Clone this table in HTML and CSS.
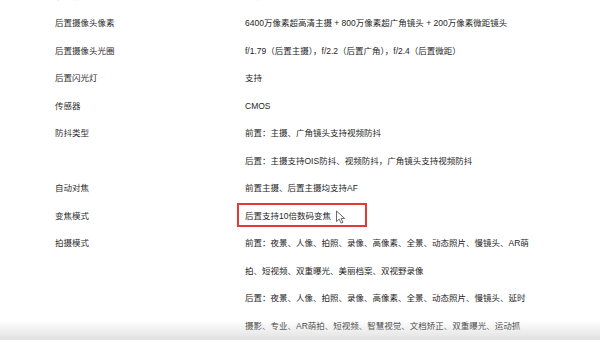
FILE: index.html
```html
<!DOCTYPE html>
<html lang="zh-CN">
<head>
<meta charset="utf-8">
<link rel="stylesheet" href="styles.css">
</head>
<body>
<div class="spec">
  <div class="row">
    <div class="label">后置摄像头数量</div>
    <div class="value"><p>三摄</p></div>
  </div>
  <div class="row">
    <div class="label">后置摄像头像素</div>
    <div class="value"><p>6400万像素超高清主摄 + 800万像素超广角镜头 + 200万像素微距镜头</p></div>
  </div>
  <div class="row">
    <div class="label">后置摄像头光圈</div>
    <div class="value"><p>f/1.79（后置主摄），f/2.2（后置广角），f/2.4（后置微距）</p></div>
  </div>
  <div class="row">
    <div class="label">后置闪光灯</div>
    <div class="value"><p>支持</p></div>
  </div>
  <div class="row">
    <div class="label">传感器</div>
    <div class="value"><p>CMOS</p></div>
  </div>
  <div class="row">
    <div class="label">防抖类型</div>
    <div class="value">
      <p>前置：主摄、广角镜头支持视频防抖</p>
      <p>后置：主摄支持OIS防抖、视频防抖，广角镜头支持视频防抖</p>
    </div>
  </div>
  <div class="row">
    <div class="label">自动对焦</div>
    <div class="value"><p>前置主摄、后置主摄均支持AF</p></div>
  </div>
  <div class="row">
    <div class="label">变焦模式</div>
    <div class="value highlight">
      <p>后置支持10倍数码变焦</p>
      <span class="mark"></span>
      <svg class="cursor" width="11" height="14" viewBox="0 0 11 14"><path d="M1.5 1 L1.5 11.5 L4.2 9.2 L6.2 13.2 L8 12.3 L6 8.4 L9.6 8.4 Z" fill="#fff" stroke="#6b6b6b" stroke-width="1" stroke-linejoin="round"/></svg>
    </div>
  </div>
  <div class="row">
    <div class="label">拍摄模式</div>
    <div class="value">
      <p>前置：夜景、人像、拍照、录像、高像素、全景、动态照片、慢镜头、AR萌<br>拍、短视频、双重曝光、美丽档案、双视野录像</p>
      <p>后置：夜景、人像、拍照、录像、高像素、全景、动态照片、慢镜头、延时<br>摄影、专业、AR萌拍、短视频、智慧视觉、文档矫正、双重曝光、运动抓<br>拍</p>
    </div>
  </div>
</div>
<div class="fade"></div>
</body>
</html>
```

FILE: styles.css
```css
html, body {
  margin: 0;
  padding: 0;
  background: #fff;
  overflow: hidden;
}

body {
  font-family: "Liberation Sans", "Noto Sans CJK SC", sans-serif;
  font-size: 8.5px;
  color: #262626;
  line-height: 27.5px;
}

.spec {
  margin-top: -17.25px;
  padding-left: 55px;
}

.row {
  display: grid;
  grid-template-columns: 190px 1fr;
}

.label {
  color: #2e2e2e;
}

.value p {
  margin: 0;
  white-space: nowrap;
}

.highlight {
  position: relative;
}

.mark {
  position: absolute;
  left: -8px;
  top: 0;
  width: 130px;
  height: 24px;
  box-sizing: border-box;
  border: 2px solid #e23a35;
}

.cursor {
  position: absolute;
  left: 90px;
  top: 7px;
}

.fade {
  position: fixed;
  left: 0;
  right: 0;
  bottom: 0;
  height: 20px;
  background: linear-gradient(to bottom, rgba(220, 220, 220, 0), rgba(215, 215, 215, 0.75));
  pointer-events: none;
}
```
